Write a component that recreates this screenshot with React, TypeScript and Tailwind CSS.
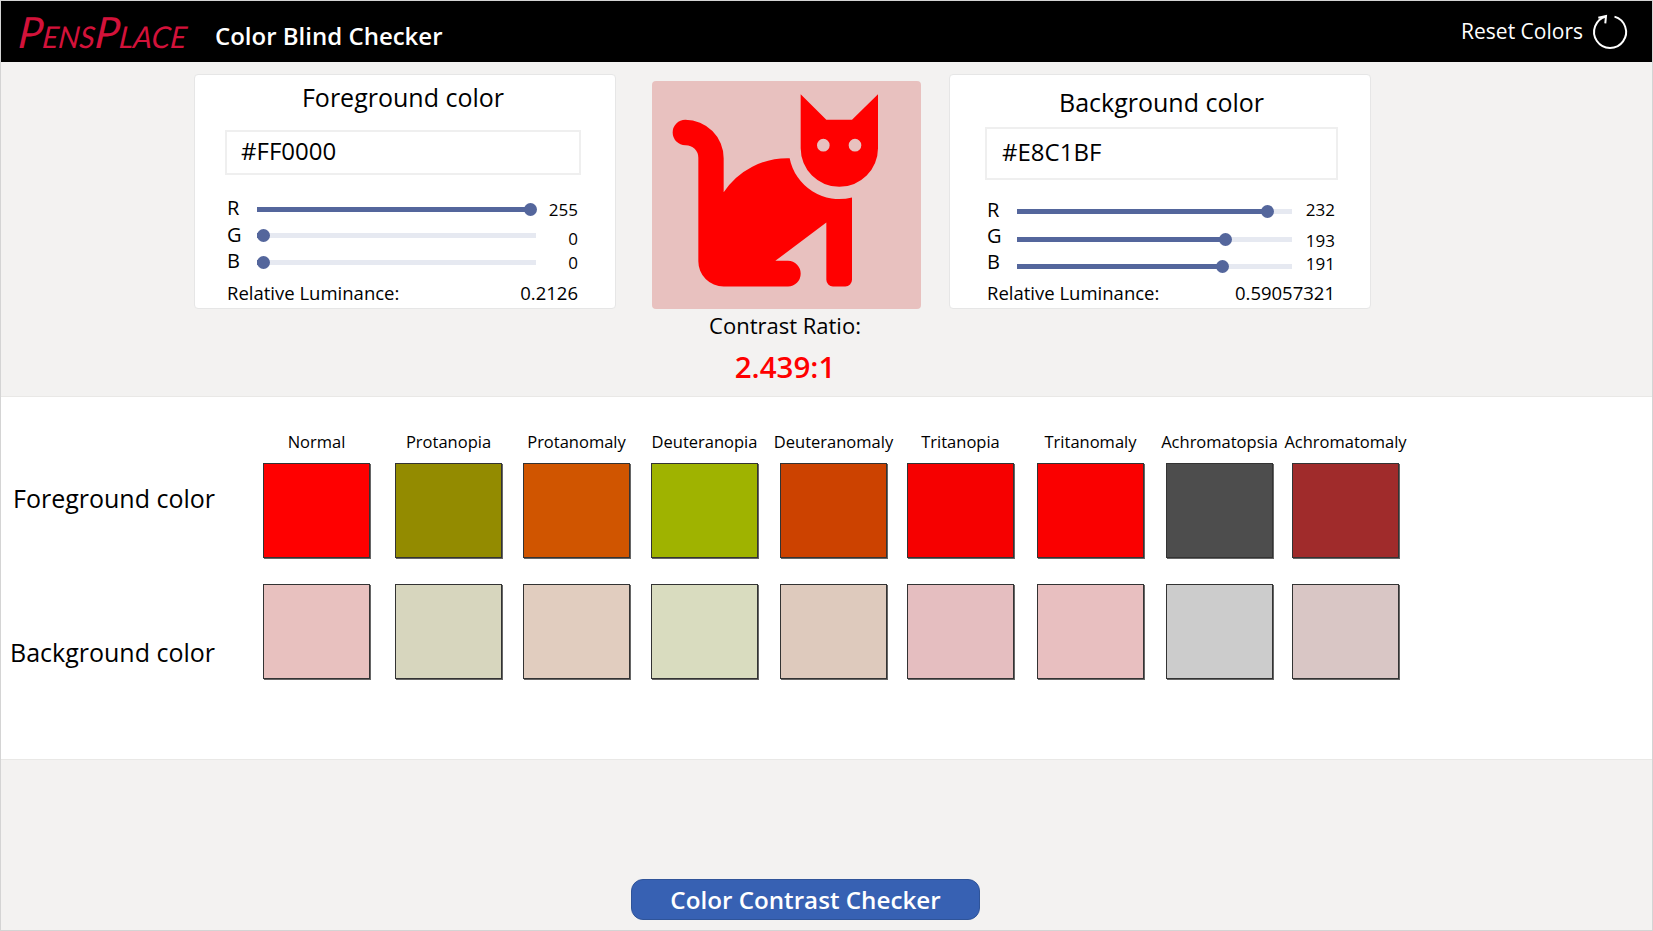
import React from 'react'

const SWATCHES = [
  { name: 'Normal', fg: '#FF0000', bg: '#E8C1BF' },
  { name: 'Protanopia', fg: '#938B00', bg: '#D7D6BE' },
  { name: 'Protanomaly', fg: '#D05500', bg: '#E1CDBF' },
  { name: 'Deuteranopia', fg: '#9FB300', bg: '#D9DCBF' },
  { name: 'Deuteranomaly', fg: '#CC4200', bg: '#DECABD' },
  { name: 'Tritanopia', fg: '#F60000', bg: '#E5BEC0' },
  { name: 'Tritanomaly', fg: '#FA0000', bg: '#E8BFC0' },
  { name: 'Achromatopsia', fg: '#4D4D4D', bg: '#CCCCCC' },
  { name: 'Achromatomaly', fg: '#A02B2B', bg: '#D9C6C5' },
]

interface SliderRowProps {
  label: string
  value: number
  thumb: number
  trackWidth: string
  rowClass: string
  valueClass?: string
  labelClass?: string
}

function SliderRow({ label, value, thumb, trackWidth, rowClass, valueClass, labelClass }: SliderRowProps) {
  return (
    <div className={`flex items-center ${rowClass}`}>
      <div className={`w-[30px] shrink-0 text-[20px] leading-none text-black ${labelClass ?? ''}`}>{label}</div>
      <div className={`flex items-center h-[5px] bg-[#e6e9f1] shrink-0 ${trackWidth}`}>
        <div className="h-full bg-[#54669c] shrink-0" style={{ width: thumb }} />
        <div className="w-[13px] h-[13px] rounded-full bg-[#54669c] shrink-0 -ml-[6.5px]" />
      </div>
      <div className={`flex-1 text-right text-[17px] leading-none text-black ${valueClass ?? ''}`}>{value}</div>
    </div>
  )
}

function ResetIcon() {
  return (
    <svg width="40" height="40" viewBox="0 0 40 40" fill="none" stroke="white" strokeWidth="2">
      <path d="M24.5 4.6A16 16 0 1 1 16 4.5" />
      <path d="M8.3 5.7L16 4L15.3 11.3" />
    </svg>
  )
}

function CatIcon() {
  return (
    <svg className="w-full h-full" viewBox="95 65 807 681" fill="#FF0000">
      <path d="M195 180A38 38 0 0 0 195 256A38 38 0 0 1 234 295V603A76 76 0 0 0 310 680H503A38 38 0 0 0 541 642A38 38 0 0 0 503 603H465L618 488V660A20 20 0 0 0 638 680H675A20 20 0 0 0 695 660V413A152 152 0 0 1 508 295A230 230 0 0 0 310 397V295A115 115 0 0 0 195 180Z" />
      <path
        fillRule="evenodd"
        d="M541 103L618 180H695L773 103V265A116 116 0 0 1 541 265ZM609 237A19 19 0 1 0 609 275A19 19 0 1 0 609 237ZM704 237A19 19 0 1 0 704 275A19 19 0 1 0 704 237Z"
      />
    </svg>
  )
}

export default function App() {
  return (
    <div className="w-[1653px] h-[931px] overflow-hidden flex flex-col bg-[#f3f2f1] border-l border-r border-t border-b border-[#d4d4d4] font-['Open_Sans',sans-serif] text-black">
      {/* Header */}
      <div className="h-[61px] shrink-0 bg-black flex items-center pl-[18px] pr-[22px]">
        <div className="w-[196px] shrink-0 -skew-x-6 text-[43px] leading-none italic [font-variant:small-caps] text-[#d3123a] font-['Lato',sans-serif] whitespace-nowrap">
          PensPlace
        </div>
        <div className="text-[24px] font-semibold text-white pt-[8px]">Color Blind Checker</div>
        <div className="ml-auto flex items-center gap-[7px] text-white text-[21px]">
          <span>Reset Colors</span>
          <ResetIcon />
        </div>
      </div>

      {/* Pickers */}
      <div className="h-[334px] shrink-0 flex items-start pt-[12px] pl-[193px]">
        {/* Foreground card */}
        <div className="w-[422px] h-[235px] bg-white rounded-[4px] border border-[#e6e6e6] shrink-0 pl-[30px] pr-[34px] pt-[6px]">
          <div className="text-[25px] leading-[32px] text-center">Foreground color</div>
          <div className="h-[45px] mt-[17px] border-2 border-[#efefef] flex items-center pl-[14px] pb-[4px] text-[24px]">#FF0000</div>
          <div className="mt-[21px] pl-[2px] pr-[3px]">
            <SliderRow label="R" value={255} thumb={273} trackWidth="w-[279px]" rowClass="h-[26.5px]" labelClass="-mt-[2px]" />
            <SliderRow label="G" value={0} thumb={6.5} trackWidth="w-[279px]" rowClass="h-[26.5px]" valueClass="mt-[5px]" labelClass="-mt-[2px]" />
            <SliderRow label="B" value={0} thumb={6.5} trackWidth="w-[279px]" rowClass="h-[26.5px]" labelClass="-mt-[2px]" />
            <div className="flex justify-between mt-[5px] text-[18.5px] leading-[24px]">
              <span>Relative Luminance:</span>
              <span>0.2126</span>
            </div>
          </div>
        </div>

        {/* Preview */}
        <div className="w-[269px] shrink-0 ml-[36px] pt-[7px] flex flex-col items-center">
          <div className="w-[269px] h-[228px] bg-[#E8C1BF] rounded-[4px]">
            <CatIcon />
          </div>
          <div className="mt-[1px] pr-[3px] text-[22px] leading-[30px] font-medium">Contrast Ratio:</div>
          <div className="mt-[7px] pr-[3px] text-[29.5px] leading-[40px] font-semibold text-[#FF0000]">2.439:1</div>
        </div>

        {/* Background card */}
        <div className="w-[422px] h-[235px] bg-white rounded-[4px] border border-[#e6e6e6] shrink-0 ml-[28px] pl-[35px] pr-[32px] pt-[11px]">
          <div className="text-[25px] leading-[32px] text-center">Background color</div>
          <div className="h-[53px] mt-[9px] border-2 border-[#efefef] flex items-center pl-[15px] pb-[4px] text-[24px]">#E8C1BF</div>
          <div className="mt-[18px] pl-[2px] pr-[3px]">
            <SliderRow label="R" value={232} thumb={250} trackWidth="w-[275px]" rowClass="h-[27.5px]" valueClass="-mt-[4px]" labelClass="-mt-[4px]" />
            <SliderRow label="G" value={193} thumb={208} trackWidth="w-[275px]" rowClass="h-[27.5px]" valueClass="mt-[2px]" labelClass="-mt-[6px]" />
            <SliderRow label="B" value={191} thumb={205} trackWidth="w-[275px]" rowClass="h-[27.5px]" valueClass="-mt-[6px]" labelClass="-mt-[10px]" />
            <div className="flex justify-between mt-[0px] text-[18.5px] leading-[24px]">
              <span>Relative Luminance:</span>
              <span>0.59057321</span>
            </div>
          </div>
        </div>
      </div>

      {/* Simulations */}
      <div className="h-[364px] shrink-0 bg-white border-t border-b border-[#e9e8e6] pt-[32px]">
        <div className="grid grid-cols-[262px_132px_128px_128px_129px_127px_130px_129px_126px_107px] grid-rows-[34px_121px_95px]">
          <div />
          {SWATCHES.map((s) => (
            <div key={s.name} className="w-[107px] flex justify-center">
              <span className="whitespace-nowrap text-[16.5px] leading-[26px]">{s.name}</span>
            </div>
          ))}

          <div className="pl-[12px] pt-[19px] text-[25px] leading-[32px]">Foreground color</div>
          {SWATCHES.map((s) => (
            <div key={s.name} className="w-[107px] h-[95px] border border-[#333333] shadow-[1px_1px_0_#666666]" style={{ backgroundColor: s.fg }} />
          ))}

          <div className="pl-[9px] pt-[52px] text-[25px] leading-[32px]">Background color</div>
          {SWATCHES.map((s) => (
            <div key={s.name} className="w-[107px] h-[95px] border border-[#333333] shadow-[1px_1px_0_#666666]" style={{ backgroundColor: s.bg }} />
          ))}
        </div>
      </div>

      {/* Footer */}
      <div className="flex-1 pt-[119px] pl-[630px]">
        <button
          type="button"
          className="w-[349px] h-[41px] pt-[1px] rounded-[12px] bg-[#3761b3] border border-[#2f5499] text-white text-[24.2px] font-semibold flex items-center justify-center"
        >
          Color Contrast Checker
        </button>
      </div>
    </div>
  )
}
